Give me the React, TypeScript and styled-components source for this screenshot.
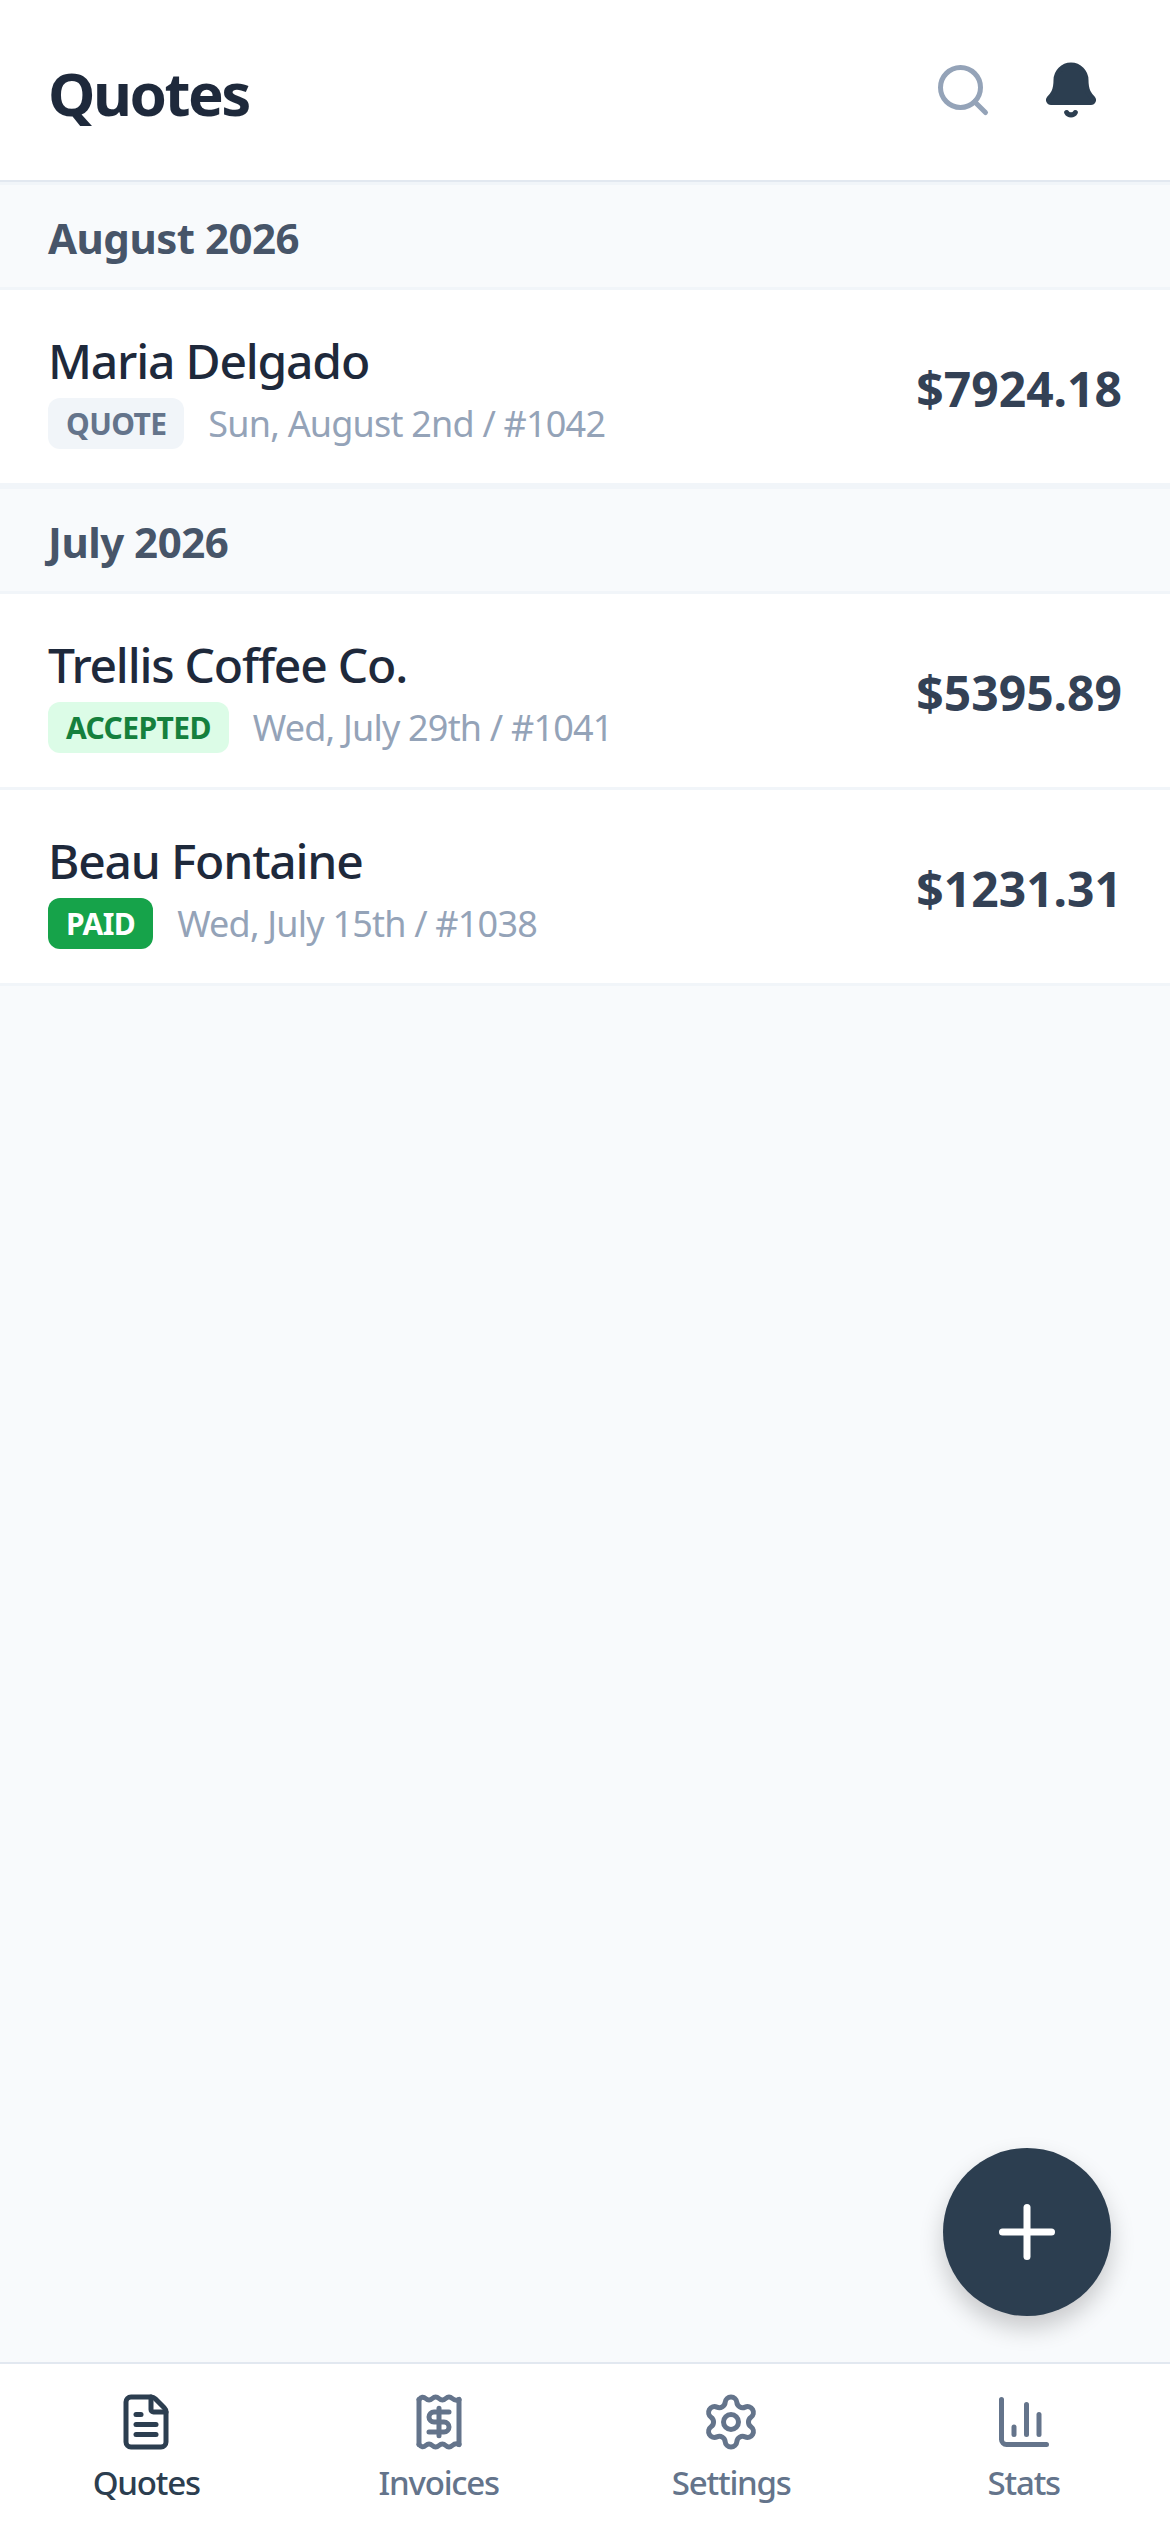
import React from "react";
import styled, { createGlobalStyle } from "styled-components";
import { Bell, ChartColumn, FileText, Plus, Search, Settings } from "lucide-react";

const GlobalStyle = createGlobalStyle`
  html, body { margin: 0; padding: 0; }
  body { font-family: "Noto Sans", "Open Sans", sans-serif; background: #f8fafc; }
`;

const Screen = styled.div`
  position: relative;
  display: flex;
  flex-direction: column;
  width: 1170px;
  height: 2532px;
  overflow: hidden;
  background: #f8fafc;
`;

const Header = styled.header`
  display: flex;
  align-items: center;
  justify-content: space-between;
  height: 180px;
  padding: 0 48px;
  background: #fff;
  border-bottom: 2px solid #e2e8f0;
`;

const Title = styled.h1`
  margin: 6px 0 0;
  font-size: 60px;
  font-weight: 700;
  letter-spacing: -2.5px;
  color: #1e293b;
`;

const HeaderActions = styled.div`
  display: flex;
  margin-right: -3px;
`;

const IconButton = styled.button<{ $color: string; $filled?: boolean }>`
  display: flex;
  padding: 24px;
  border: 0;
  background: none;
  color: ${(p) => p.$color};
  svg { fill: ${(p) => (p.$filled ? "currentColor" : "none")}; }
`;

const List = styled.main`
  flex: 1;
`;

const MonthHeading = styled.div`
  display: flex;
  align-items: center;
  box-sizing: border-box;
  height: 108px;
  padding: 2px 48px 0;
  font-size: 42px;
  font-weight: 700;
  letter-spacing: -0.5px;
  color: #475569;
  border-top: 3px solid #f1f5f9;
  border-bottom: 3px solid #f1f5f9;
`;

const QuoteRow = styled.div`
  display: flex;
  align-items: center;
  justify-content: space-between;
  height: 193px;
  padding: 0 48px;
  background: #fff;
  border-bottom: 3px solid #f1f5f9;
`;

const RowText = styled.div`
  display: flex;
  flex-direction: column;
  gap: 4px;
  margin-top: 3px;
`;

const Customer = styled.div`
  font-size: 48px;
  line-height: 66px;
  font-weight: 500;
  letter-spacing: -1.2px;
  color: #1e293b;
`;

const MetaLine = styled.div`
  display: flex;
  align-items: center;
  gap: 24px;
`;

const badgeTones = {
  quote: { bg: "#f1f5f9", fg: "#64748b" },
  accepted: { bg: "#dcfce7", fg: "#15803d" },
  paid: { bg: "#16a34a", fg: "#ffffff" },
};

type BadgeTone = keyof typeof badgeTones;

const Badge = styled.span<{ $tone: BadgeTone }>`
  padding: 0 18px;
  height: 51px;
  line-height: 51px;
  border-radius: 12px;
  font-size: 30px;
  font-weight: 700;
  letter-spacing: -0.6px;
  background: ${(p) => badgeTones[p.$tone].bg};
  color: ${(p) => badgeTones[p.$tone].fg};
`;

const MetaText = styled.span`
  font-size: 36px;
  letter-spacing: -0.8px;
  color: #94a3b8;
`;

const Amount = styled.div`
  margin-top: 4px;
  font-size: 48px;
  font-weight: 700;
  color: #334155;
`;

const Fab = styled.button`
  position: absolute;
  right: 59px;
  bottom: 216px;
  display: flex;
  align-items: center;
  justify-content: center;
  width: 168px;
  height: 168px;
  padding: 0;
  border: 0;
  border-radius: 50%;
  background: #2c3e50;
  color: #fff;
  box-shadow: 0 12px 24px rgba(0, 0, 0, 0.2);
`;

const TabBar = styled.nav`
  display: grid;
  grid-template-columns: repeat(4, 1fr);
  height: 168px;
  background: #fff;
  border-top: 2px solid #e2e8f0;
`;

const Tab = styled.div<{ $active?: boolean }>`
  display: flex;
  flex-direction: column;
  align-items: center;
  gap: 8px;
  padding-top: 28px;
  font-size: 33px;
  font-weight: 500;
  line-height: 45px;
  letter-spacing: -1.2px;
  color: ${(p) => (p.$active ? "#2c3e50" : "#64748b")};
`;

// lucide has no receipt with a wavy edge, so this one is drawn by hand
function ReceiptIcon() {
  return (
    <svg width="60" height="60" viewBox="0 0 24 24" fill="none" stroke="currentColor" strokeWidth="2" strokeLinecap="round" strokeLinejoin="round">
      <path d="M4 3v18M20 3v18" />
      <path d="M4 3Q5.33 1.4 6.67 2.6T9.33 2.6T12 2.6T14.67 2.6T17.33 2.6T20 3" />
      <path d="M4 21Q5.33 22.6 6.67 21.4T9.33 21.4T12 21.4T14.67 21.4T17.33 21.4T20 21" />
      <path d="M16 8h-6a2 2 0 1 0 0 4h4a2 2 0 1 1 0 4H8" />
      <path d="M12 17.5v-11" />
    </svg>
  );
}

const months = [
  {
    name: "August 2026",
    quotes: [
      { id: 1042, customer: "Maria Delgado", tone: "quote" as BadgeTone, status: "QUOTE", date: "Sun, August 2nd", total: "$7924.18" },
    ],
  },
  {
    name: "July 2026",
    quotes: [
      { id: 1041, customer: "Trellis Coffee Co.", tone: "accepted" as BadgeTone, status: "ACCEPTED", date: "Wed, July 29th", total: "$5395.89" },
      { id: 1038, customer: "Beau Fontaine", tone: "paid" as BadgeTone, status: "PAID", date: "Wed, July 15th", total: "$1231.31" },
    ],
  },
];

export default function App() {
  return (
    <Screen>
      <GlobalStyle />
      <Header>
        <Title>Quotes</Title>
        <HeaderActions>
          <IconButton $color="#94a3b8"><Search size={60} /></IconButton>
          <IconButton $color="#2c3e50" $filled><Bell size={60} /></IconButton>
        </HeaderActions>
      </Header>
      <List>
        {months.map((month) => (
          <section key={month.name}>
            <MonthHeading>{month.name}</MonthHeading>
            {month.quotes.map((quote) => (
              <QuoteRow key={quote.id}>
                <RowText>
                  <Customer>{quote.customer}</Customer>
                  <MetaLine>
                    <Badge $tone={quote.tone}>{quote.status}</Badge>
                    <MetaText>{quote.date} / #{quote.id}</MetaText>
                  </MetaLine>
                </RowText>
                <Amount>{quote.total}</Amount>
              </QuoteRow>
            ))}
          </section>
        ))}
      </List>
      <Fab><Plus size={84} /></Fab>
      <TabBar>
        <Tab $active><FileText size={60} />Quotes</Tab>
        <Tab><ReceiptIcon />Invoices</Tab>
        <Tab><Settings size={60} />Settings</Tab>
        <Tab><ChartColumn size={60} />Stats</Tab>
      </TabBar>
    </Screen>
  );
}
